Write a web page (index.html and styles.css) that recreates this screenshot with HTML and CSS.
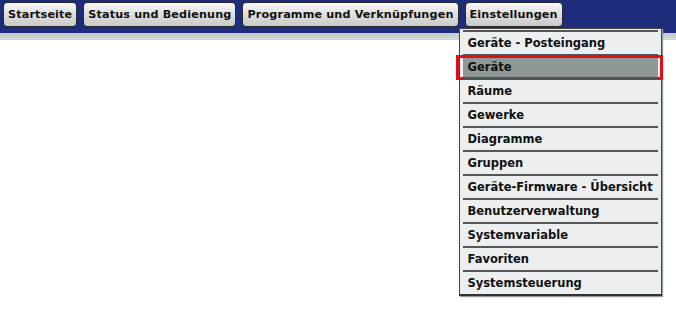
FILE: index.html
```html
<!DOCTYPE html>
<html lang="de">
<head>
  <meta charset="UTF-8" />
  <title>Einstellungen</title>
  <link rel="stylesheet" href="styles.css">
</head>
<body>
  <div class="top-bar">
    <button class="nav-btn">Startseite</button>
    <button class="nav-btn">Status und Bedienung</button>
    <button class="nav-btn">Programme und Verknüpfungen</button>
    <div class="nav-item">
      <button class="nav-btn">Einstellungen</button>
      <!-- Untermenü Einstellungen -->
      <ul class="menu">
        <li>Geräte - Posteingang</li>
        <li class="active">Geräte</li>
        <li>Räume</li>
        <li>Gewerke</li>
        <li>Diagramme</li>
        <li>Gruppen</li>
        <li>Geräte-Firmware - Übersicht</li>
        <li>Benutzerverwaltung</li>
        <li>Systemvariable</li>
        <li>Favoriten</li>
        <li>Systemsteuerung</li>
      </ul>
    </div>
  </div>
  <div class="sub-bar"></div>
</body>
</html>
```

FILE: styles.css
```css
html, body {
  height: 100%;
}

body {
  margin: 0;
  padding: 0;
  min-height: 325px;
  font-family: 'DejaVu Sans', Verdana, sans-serif;
  background-color: #fff;
  color: #111;
}

.top-bar {
  display: flex;
  align-items: flex-start;
  gap: 6px;
  height: 31px;
  padding: 2px 0 0 3px;
  background-color: #1e2c7c;
}

.nav-btn {
  height: 25px;
  padding: 0 4px;
  font-family: inherit;
  font-size: 11.2px;
  font-weight: bold;
  letter-spacing: 0.15px;
  color: #111;
  background: linear-gradient(#f7f7f7, #dadada 60%, #c9c9c9);
  border: 1px solid #2a2a2a;
  border-radius: 4px;
  cursor: pointer;
}

.nav-item {
  position: relative;
}

.sub-bar {
  height: 7px;
  background: linear-gradient(#c4cccb, #d3d9d8);
}

.menu {
  position: absolute;
  top: 26px;
  left: -6px;
  z-index: 10;
  width: 195px;
  margin: 0;
  padding: 1px 3px 0 3px;
  list-style: none;
  background-color: #eceff0;
  border: 1px solid #444;
  border-bottom: 2px solid #333;
  box-shadow: 1px 1px 1px #999;
}

.menu li {
  position: relative;
  height: 22px;
  line-height: 22px;
  padding-left: 5px;
  font-size: 11.5px;
  font-weight: bold;
  white-space: nowrap;
  border-top: 2px solid #555;
}

.menu li.active {
  background-color: #8e9997;
}

/* Markierung um den aktiven Eintrag */
.menu li.active::after {
  content: "";
  position: absolute;
  top: -1px;
  bottom: -2px;
  left: -7px;
  right: -5px;
  border: 3px solid #e01019;
}
```
